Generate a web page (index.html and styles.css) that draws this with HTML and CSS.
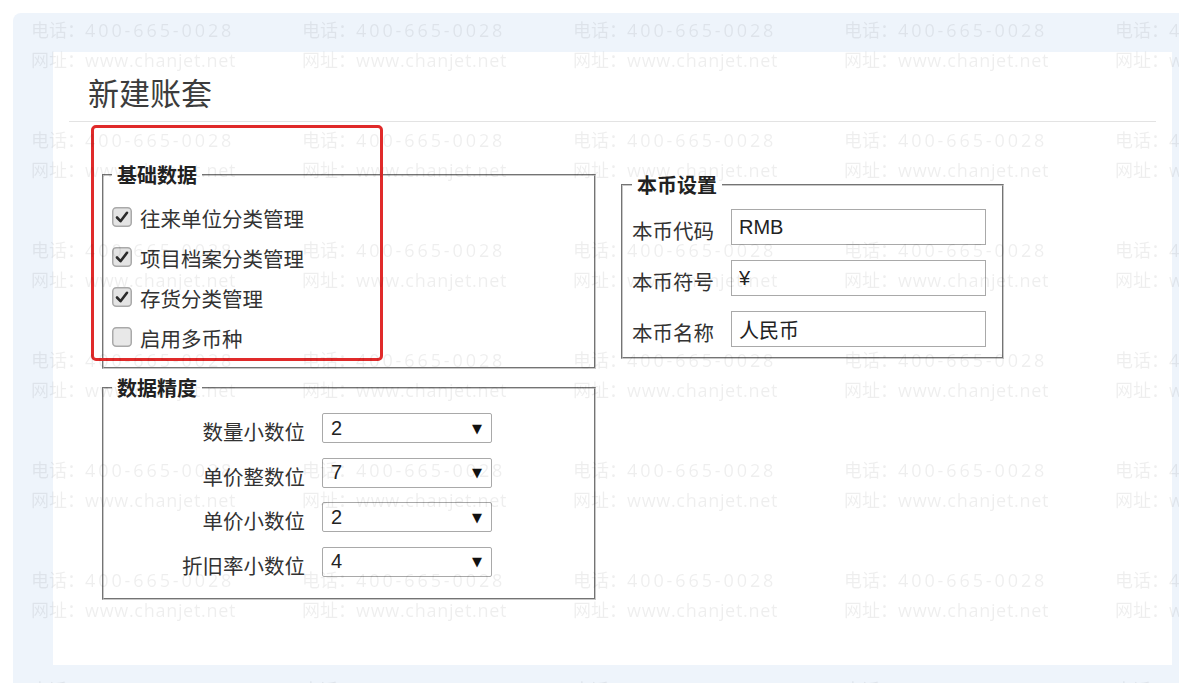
FILE: index.html
```html
<!DOCTYPE html>
<html lang="zh-CN">
<head>
  <meta charset="UTF-8">
  <meta name="viewport" content="width=device-width, initial-scale=1.0">
  <title>新建账套</title>
  <link rel="stylesheet" href="styles.css">
</head>
<body>
  <div class="frame">
    <div class="sheet">
      <h1 class="title">新建账套</h1>
      <div class="rule"></div>

      <div class="content">
        <div class="col-left">
          <!-- 基础数据 -->
          <fieldset class="group group-base">
            <legend>基础数据</legend>
            <label class="check">
              <svg class="box" width="20" height="20" viewBox="0 0 20 20"><rect x="0.75" y="0.75" width="18.5" height="18.5" rx="3.5" fill="#e4e4e4" stroke="#a9a9a9" stroke-width="1.5"/><path d="M5 10.5 L8.5 14.2 L15 5.8" fill="none" stroke="#2b2b2b" stroke-width="2.6" stroke-linecap="round" stroke-linejoin="round"/></svg>
              往来单位分类管理
            </label>
            <label class="check">
              <svg class="box" width="20" height="20" viewBox="0 0 20 20"><rect x="0.75" y="0.75" width="18.5" height="18.5" rx="3.5" fill="#e4e4e4" stroke="#a9a9a9" stroke-width="1.5"/><path d="M5 10.5 L8.5 14.2 L15 5.8" fill="none" stroke="#2b2b2b" stroke-width="2.6" stroke-linecap="round" stroke-linejoin="round"/></svg>
              项目档案分类管理
            </label>
            <label class="check">
              <svg class="box" width="20" height="20" viewBox="0 0 20 20"><rect x="0.75" y="0.75" width="18.5" height="18.5" rx="3.5" fill="#e4e4e4" stroke="#a9a9a9" stroke-width="1.5"/><path d="M5 10.5 L8.5 14.2 L15 5.8" fill="none" stroke="#2b2b2b" stroke-width="2.6" stroke-linecap="round" stroke-linejoin="round"/></svg>
              存货分类管理
            </label>
            <label class="check">
              <svg class="box" width="20" height="20" viewBox="0 0 20 20"><rect x="0.75" y="0.75" width="18.5" height="18.5" rx="3.5" fill="#e8e8e8" stroke="#a9a9a9" stroke-width="1.5"/></svg>
              启用多币种
            </label>
          </fieldset>

          <!-- 数据精度 -->
          <fieldset class="group group-precision">
            <legend>数据精度</legend>
            <div class="field-grid">
              <span class="field-label">数量小数位</span>
              <div class="select"><span>2</span><span class="arrow">▼</span></div>
              <span class="field-label">单价整数位</span>
              <div class="select"><span>7</span><span class="arrow">▼</span></div>
              <span class="field-label">单价小数位</span>
              <div class="select"><span>2</span><span class="arrow">▼</span></div>
              <span class="field-label">折旧率小数位</span>
              <div class="select"><span>4</span><span class="arrow">▼</span></div>
            </div>
          </fieldset>
        </div>

        <div class="col-right">
          <!-- 本币设置 -->
          <fieldset class="group group-currency">
            <legend>本币设置</legend>
            <div class="currency-grid">
              <span class="field-label">本币代码</span>
              <input class="text-input" type="text" value="RMB">
              <span class="field-label">本币符号</span>
              <input class="text-input" type="text" value="¥">
              <span class="field-label">本币名称</span>
              <input class="text-input" type="text" value="人民币">
            </div>
          </fieldset>
        </div>
      </div>

      <!-- красная рамка-выделение -->
      <div class="mark-box"></div>
    </div>
  </div>

  <div class="watermark" id="watermark"></div>

  <script>
    document.addEventListener('DOMContentLoaded', () => {
      const wm = document.getElementById('watermark');
      for (let i = 0; i < 35; i++) {
        const tile = document.createElement('div');
        tile.className = 'wm-tile';
        tile.innerHTML = '<div>电话：<span class="wm-phone">400-665-0028</span></div>' +
          '<div>网址：<span class="wm-url">www.chanjet.net</span></div>';
        wm.appendChild(tile);
      }
    });
  </script>
</body>
</html>
```

FILE: styles.css
```css
/* 1. Общие настройки */
* {
  margin: 0;
  padding: 0;
  box-sizing: border-box;
}

body {
  font-family: 'Noto Sans CJK SC', sans-serif;
  background: #fff;
  color: #333;
  height: 683px;
  overflow: hidden;
}

/* 2. Голубая подложка и белый лист */
.frame {
  margin: 13px 0 0 13px;
  height: 670px;
  background: #eef4fb;
  border-radius: 8px 0 0 0;
  padding: 39px 7px 18px 40px;
}

.sheet {
  position: relative;
  height: 100%;
  background: #fff;
  padding-top: 20px;
}

.title {
  padding-left: 35px;
  font-size: 31px;
  font-weight: normal;
  line-height: 40px;
  color: #3c3c3c;
}

.rule {
  margin: 9px 16px 0;
  border-top: 1px solid #e3e3e3;
}

/* 3. Колонки */
.content {
  display: flex;
  gap: 25px;
  margin-top: 41px;
  padding-left: 49px;
}

.col-left {
  width: 494px;
}

.col-right {
  width: 383px;
  padding-top: 10px;
}

/* 4. Группы */
.group {
  border: 2px groove #c8c8c8;
  padding: 0 0 9px 8px;
}

.group legend {
  padding: 0 5px;
  font-size: 20px;
  font-weight: bold;
  line-height: 24px;
  color: #222;
}

.group-precision {
  margin-top: 7px;
  padding-bottom: 21px;
}

.group-currency {
  padding: 0 0 10px 9px;
}

/* 5. Чекбоксы */
.group-base legend {
  margin-bottom: 11px;
}

.check {
  display: flex;
  align-items: center;
  gap: 8px;
  height: 40px;
  font-size: 20.5px;
  color: #333;
}

.check .box {
  flex: none;
  margin-top: -3px;
}

/* 6. Поля */
.field-label {
  padding-top: 6px;
  font-size: 20.5px;
  color: #333;
  white-space: nowrap;
}

.field-grid {
  display: grid;
  grid-template-columns: 193px 170px;
  grid-auto-rows: 30px;
  column-gap: 17px;
  row-gap: 14.5px;
  align-items: center;
  margin-top: 13px;
}

.field-grid .field-label {
  text-align: right;
}

.select {
  display: flex;
  align-items: center;
  justify-content: space-between;
  height: 30px;
  padding: 0 9px 0 8px;
  border: 1px solid #a9a9a9;
  border-radius: 2px;
  background: #fff;
  font-family: 'Liberation Sans', sans-serif;
  font-size: 20px;
  color: #222;
}

.select .arrow {
  font-family: 'DejaVu Sans', sans-serif;
  font-size: 13px;
  color: #111;
}

.currency-grid {
  display: grid;
  grid-template-columns: 99px 255px;
  grid-auto-rows: 36px;
  row-gap: 15px;
  align-items: center;
  margin-top: 12px;
}

.text-input {
  height: 36px;
  width: 255px;
  padding: 0 7px;
  border: 1px solid #a9a9a9;
  background: #fff;
  font-family: 'Liberation Sans', 'Noto Sans CJK SC', sans-serif;
  font-size: 20px;
  color: #222;
  outline: none;
}

/* 7. Красная рамка */
.mark-box {
  position: absolute;
  left: 38px;
  top: 73px;
  width: 292px;
  height: 236px;
  border: 3px solid #e02a2a;
  border-radius: 5px;
}

/* 8. Водяной знак */
.watermark {
  position: fixed;
  top: 15px;
  left: 31px;
  right: 0;
  bottom: 0;
  display: grid;
  grid-template-columns: repeat(5, 271px);
  grid-auto-rows: 110px;
  overflow: hidden;
  pointer-events: none;
  z-index: 10;
}

.wm-tile {
  font-family: 'Open Sans', 'Noto Sans CJK SC', sans-serif;
  font-size: 18px;
  line-height: 30px;
  white-space: nowrap;
  color: rgba(0, 0, 0, 0.065);
}

.wm-phone {
  letter-spacing: 2.9px;
}

.wm-url {
  letter-spacing: 0.7px;
}
```
